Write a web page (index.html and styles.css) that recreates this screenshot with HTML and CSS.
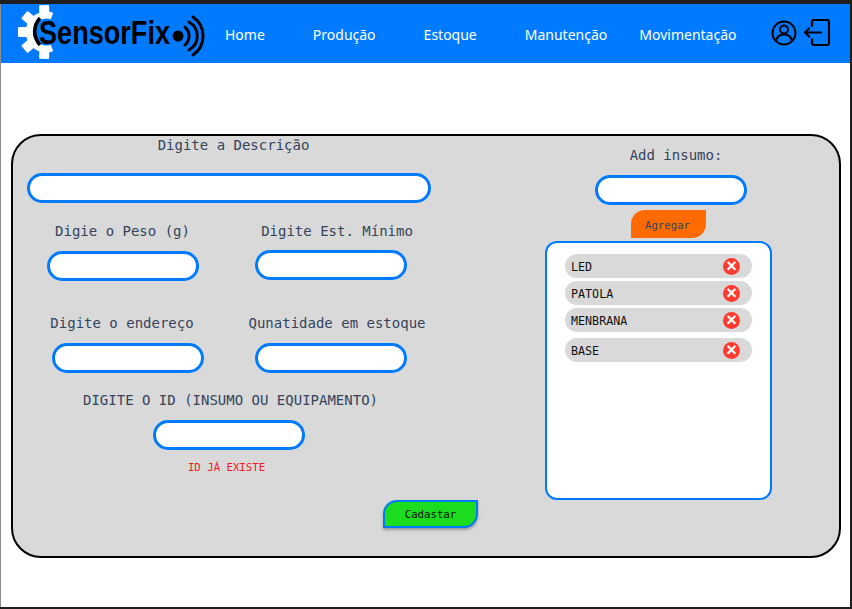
FILE: index.html
```html
<!DOCTYPE html>
<html>
<head>
  <title>SensorFix</title>
  <meta name="viewport" content="width=device-width, initial-scale=1.0">
  <link rel="stylesheet" href="styles.css">
</head>
<body>
  <header class="topbar">
    <svg class="logo" width="200" height="59" viewBox="0 0 200 59">
      <path d="M36 12A17 17 0 1 0 36 44" fill="none" stroke="#fff" stroke-width="7"/>
      <g fill="#fff" transform="translate(29 28)">
        <rect x="-5" y="-27" width="10" height="9" rx="1" transform="rotate(-2)"/>
        <rect x="-5" y="-27" width="10" height="9" rx="1" transform="rotate(-50)"/>
        <rect x="-5" y="-27" width="10" height="9" rx="1" transform="rotate(-90)"/>
        <rect x="-5" y="-27" width="10" height="9" rx="1" transform="rotate(-130)"/>
        <rect x="-5" y="-27" width="10" height="9" rx="1" transform="rotate(-178)"/>
      </g>
      <path d="M24 14A20 20 0 0 0 24 41" fill="none" stroke="#000" stroke-width="3.500"/>
      <text class="logo-name" x="23" y="39.500" textLength="131" lengthAdjust="spacingAndGlyphs">SensorFix</text>
      <circle cx="162" cy="32" r="5.500"/>
      <g fill="none" stroke="#000" stroke-width="3" stroke-linecap="round">
        <path d="M169 23A12 12 0 0 1 169 41"/>
        <path d="M173 18A16 16 0 0 1 173 46"/>
        <path d="M177 13A23 23 0 0 1 177 51"/>
      </g>
    </svg>
    <nav class="menu">
      <a href="#">Home</a>
      <a href="#">Produção</a>
      <a href="#">Estoque</a>
      <a href="#">Manutenção</a>
      <a href="#" class="menu-last">Movimentação</a>
    </nav>
    <div class="topbar-icons">
      <svg width="26" height="26" viewBox="0 0 26 26" fill="none" stroke="#000" stroke-width="2">
        <circle cx="13" cy="13" r="11.500"/>
        <circle cx="13" cy="9.500" r="4"/>
        <path d="M5 21c1-5 4-6.500 8-6.500s7 1.500 8 6.500"/>
      </svg>
      <svg width="28" height="27" viewBox="0 0 28 27" fill="none" stroke="#000" stroke-width="2.200" stroke-linecap="round" stroke-linejoin="round">
        <path d="M9 7V3a2 2 0 0 1 2-2h13a2 2 0 0 1 2 2v21a2 2 0 0 1-2 2H11a2 2 0 0 1-2-2v-4"/>
        <path d="M18 13.500H2M6 9.500l-4 4 4 4"/>
      </svg>
    </div>
  </header>

  <main class="panel">
    <section class="form-side">
      <div class="field field-wide">
        <label class="label-desc">Digite a Descrição</label>
        <input type="text">
      </div>

      <div class="row row-peso">
        <div class="field">
          <label class="label-peso">Digie o Peso (g)</label>
          <input type="text">
        </div>
        <div class="field field-up">
          <label class="label-right">Digite Est. Mínimo</label>
          <input type="text">
        </div>
      </div>

      <div class="row row-endereco">
        <div class="field">
          <label class="label-left">Digite o endereço</label>
          <input type="text">
        </div>
        <div class="field">
          <label class="label-right">Qunatidade em estoque</label>
          <input type="text">
        </div>
      </div>

      <div class="field field-id">
        <label>DIGITE O ID (INSUMO OU EQUIPAMENTO)</label>
        <input type="text">
        <p class="error">ID JÁ EXISTE</p>
      </div>
    </section>

    <section class="insumo-side">
      <div class="field">
        <label class="label-add">Add insumo:</label>
        <input type="text">
      </div>
      <button type="button" class="btn btn-add">Agregar</button>
      <ul class="insumo-list">
        <li>LED <span class="remove">×</span></li>
        <li>PATOLA <span class="remove">×</span></li>
        <li>MENBRANA <span class="remove">×</span></li>
        <li class="item-last">BASE <span class="remove">×</span></li>
      </ul>
    </section>

    <div class="panel-footer">
      <button type="button" class="btn btn-save">Cadastar</button>
    </div>
  </main>
</body>
</html>
```

FILE: styles.css
```css
html {
  background: #1e1e1e;
}

body {
  margin: 4px 0 0;
  width: 849px;
  height: 603px;
  border-left: 1px solid #8c8c8c;
  background: #fff;
  font-family: "DejaVu Sans Mono", "Liberation Mono", monospace;
  overflow: hidden;
}

.topbar {
  height: 59px;
  background: #007bff;
  display: flex;
  align-items: center;
}

.logo {
  margin-left: 15px;
  flex: none;
}

.logo-name {
  font-family: "Liberation Sans Narrow", "Liberation Sans", sans-serif;
  font-weight: bold;
  font-size: 34px;
}

.menu {
  display: flex;
  gap: 48px;
  margin-left: 9px;
  padding-top: 2px;
}

.menu a {
  font-family: "Noto Sans", "Open Sans", sans-serif;
  font-size: 14px;
  color: #fff;
  text-decoration: none;
}

.menu .menu-last {
  margin-left: -16px;
}

.topbar-icons {
  display: flex;
  align-items: center;
  gap: 6px;
  margin-left: 35px;
  padding-bottom: 2px;
}

.panel {
  margin: 71px 0 0 10px;
  width: 830px;
  height: 424px;
  box-sizing: border-box;
  background: #d9d9d9;
  border: 2px solid #000;
  border-radius: 30px;
  display: grid;
  grid-template-columns: 532px 1fr;
  grid-template-rows: 364px auto;
}

.field {
  display: flex;
  flex-direction: column;
  align-items: center;
}

label {
  font-size: 14px;
  line-height: 17px;
  color: #34445c;
  white-space: nowrap;
}

input {
  width: 152px;
  height: 30px;
  box-sizing: border-box;
  border: 3px solid #007bff;
  border-radius: 15px;
  background: #fff;
  padding: 0 10px;
  margin-top: 11px;
}

.form-side {
  padding-left: 14px;
  width: 404px;
}

.field-wide input {
  width: 404px;
  margin-top: 19px;
}

.label-desc {
  margin: 1px 0 0 9px;
}

.row {
  display: grid;
}

.row-peso {
  padding-top: 20px;
  grid-template-columns: 192px 224px;
}

.label-peso {
  margin-left: -1px;
}

.label-left {
  margin-left: -12px;
}

.label-right {
  margin-left: 12px;
}

.field-up input {
  margin-top: 10px;
}

.row-endereco {
  padding-top: 34px;
  grid-template-columns: 202px 204px;
}

.field-id {
  margin-top: 19px;
}

.field-id label {
  margin-left: 3px;
}

.field-id input {
  margin-top: 11px;
}

.error {
  margin: 11px 0 0 -5px;
  font-size: 10.700px;
  line-height: 13px;
  color: #f01818;
}

.insumo-side {
  padding-top: 11px;
  display: flex;
  flex-direction: column;
  align-items: flex-start;
}

.insumo-side .field {
  margin-left: 50px;
}

.label-add {
  margin-left: 10px;
}

.btn {
  font-family: inherit;
  border-radius: 14px 0 14px 0;
  cursor: pointer;
  padding: 0;
}

.btn-add {
  width: 75px;
  height: 28px;
  margin: 5px 0 3px 86px;
  padding: 2px 2px 0 0;
  border: none;
  background: #ff6b00;
  color: #34445c;
  font-size: 10.700px;
}

.insumo-list {
  list-style: none;
  margin: 0;
  width: 227px;
  height: 259px;
  box-sizing: border-box;
  padding: 11px 18px;
  background: #fff;
  border: 2px solid #007bff;
  border-radius: 12px;
}

.insumo-list li {
  height: 24px;
  margin-bottom: 3px;
  padding: 1px 12px 0 6px;
  border-radius: 12px;
  background: #d9d9d9;
  display: flex;
  align-items: center;
  justify-content: space-between;
  box-sizing: border-box;
  font-size: 11.700px;
  color: #111;
}

.insumo-list li:nth-child(3) {
  margin-top: 1px;
}

.insumo-list .item-last {
  margin-top: 6px;
}

.remove {
  width: 17px;
  height: 17px;
  border-radius: 50%;
  background: #ff3b30;
  color: #fff;
  font-family: "Liberation Sans", sans-serif;
  font-size: 18px;
  font-weight: bold;
  line-height: 17px;
  text-align: center;
}

.panel-footer {
  grid-column: 1 / 3;
  padding-left: 370px;
}

.btn-save {
  width: 95px;
  height: 28px;
  border: 2px solid #007bff;
  background: #1bdc1f;
  color: #111;
  font-size: 10.700px;
  box-shadow: 0 2px 3px rgba(0, 0, 0, 0.3);
}
```
